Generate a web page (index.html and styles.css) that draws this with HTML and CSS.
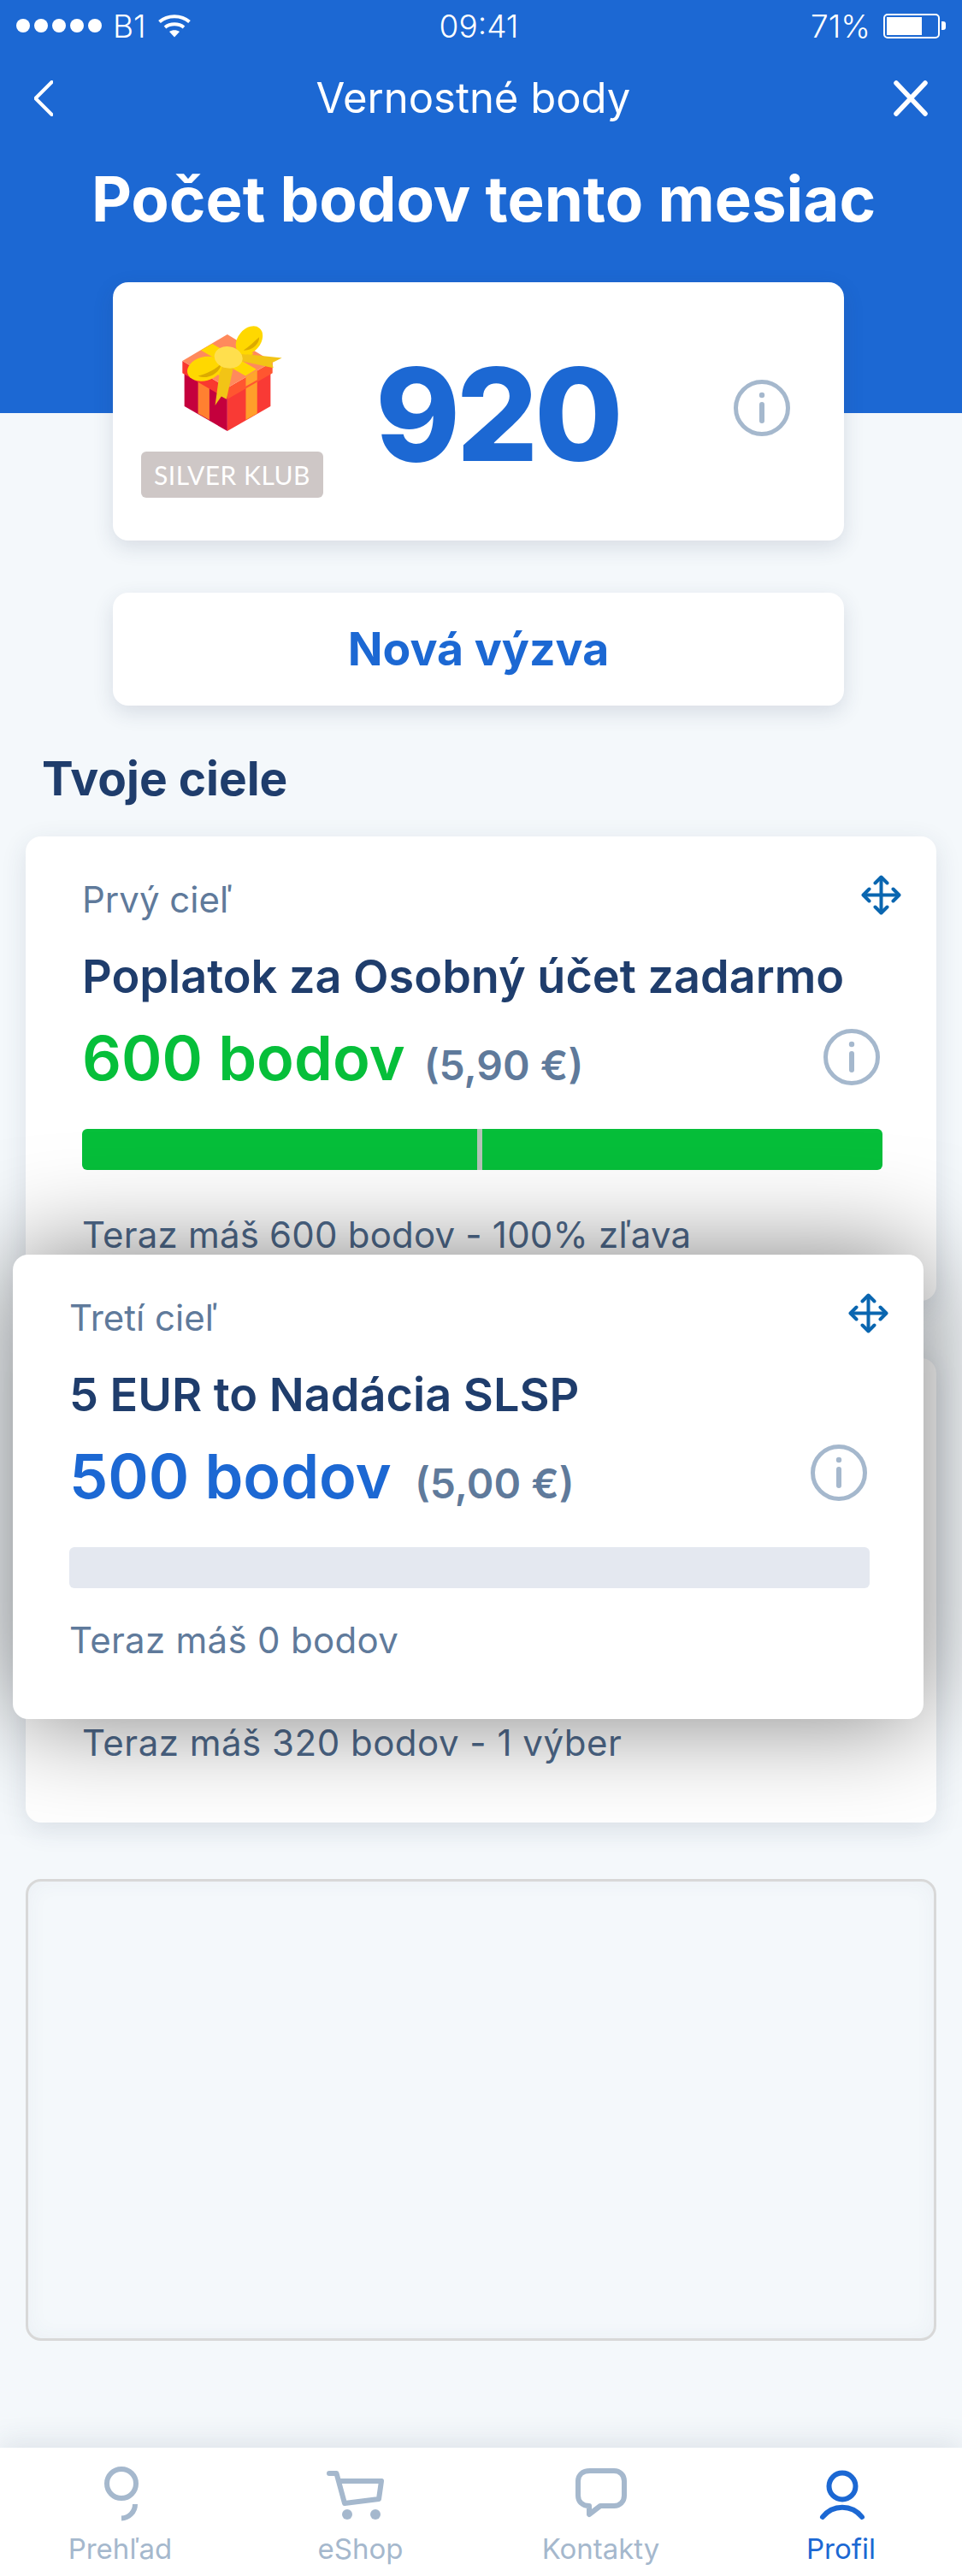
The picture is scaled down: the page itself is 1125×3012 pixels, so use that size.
FILE: index.html
```html
<!DOCTYPE html>
<html lang="sk">
<head>
<meta charset="utf-8">
<title>Vernostné body</title>
<link rel="stylesheet" href="styles.css">
</head>
<body>
<svg class="defs" width="0" height="0" aria-hidden="true">
  <defs>
    <symbol id="info" viewBox="0 0 66 66">
      <circle cx="33" cy="33" r="30.5" fill="none" stroke="currentColor" stroke-width="5"/>
      <circle cx="33" cy="18" r="3.2" fill="currentColor"/>
      <path d="M33 29V48" fill="none" stroke="currentColor" stroke-width="6" stroke-linecap="round"/>
    </symbol>
    <symbol id="move" viewBox="0 0 47 47">
      <g fill="none" stroke="currentColor" stroke-width="4" stroke-linecap="round" stroke-linejoin="round">
        <path d="M23.500 3V44M3 23.500H44"/>
        <path d="M16.500 9.500L23.500 2.500L30.500 9.500M16.500 37.500L23.500 44.500L30.500 37.500M9.500 16.500L2.500 23.500L9.500 30.500M37.500 16.500L44.500 23.500L37.500 30.500"/>
      </g>
    </symbol>
  </defs>
</svg>
<div class="page">
  <header class="hero">
    <div class="status">
      <div class="status-left">
        <span class="dots"><i></i><i></i><i></i><i></i><i></i></span>
        <span>B1</span>
        <svg class="wifi" viewBox="0 0 38 28" width="38" height="28"><g fill="none" stroke="#fff" stroke-width="4"><path d="M1.500 9.500C11 1 27 1 36.500 9.500"/><path d="M8 16C14 11 24 11 30 16"/></g><path d="M13 21C16.500 18.500 21.500 18.500 25 21L19 27.500Z" fill="#fff"/></svg>
      </div>
      <div class="status-time">09:41</div>
      <div class="status-right">
        <span>71%</span>
        <span class="battery"><span class="battery-fill"></span></span>
        <span class="battery-nub"></span>
      </div>
    </div>
    <nav class="nav">
      <svg width="22" height="42" viewBox="0 0 22 42"><path d="M20.500 2L1.500 21L20.500 40" fill="none" stroke="#fff" stroke-width="4" stroke-linecap="round" stroke-linejoin="round"/></svg>
      <span class="nav-title">Vernostné body</span>
      <svg width="40" height="42" viewBox="0 0 40 42"><path d="M3 3L37 39M37 3L3 39" fill="none" stroke="#fff" stroke-width="5.500" stroke-linecap="round"/></svg>
    </nav>
    <h1 class="hero-title">Počet bodov tento mesiac</h1>
  </header>

  <main class="main">
    <section class="summary">
      <div class="club">
        <svg class="gift" viewBox="190 92 350 370" width="117" height="123">
          <polygon points="197,250 348,340 348,462 197,375" fill="#c4003d"/>
          <polygon points="348,340 500,250 500,375 348,462" fill="#f93a35"/>
          <polygon points="245,285 285,308 285,423 245,400" fill="#ff8030"/>
          <polygon points="413,305 453,282 453,400 413,423" fill="#ff9f2a"/>
          <polygon points="190,215 348,310 348,350 190,258" fill="#f9382f"/>
          <polygon points="348,310 507,218 507,258 348,350" fill="#ff5630"/>
          <polygon points="190,215 348,122 507,218 348,310" fill="#ff8a5c"/>
          <polygon points="413,270 453,247 453,282 413,305" fill="#ffa52c"/>
          <polygon points="255,178 295,155 450,245 412,268" fill="#ffd800"/>
          <polygon points="400,165 440,190 322,268 285,245" fill="#ffd800"/>
          <polygon points="395,190 540,205 505,222 510,240 395,215" fill="#f2c416"/>
          <polygon points="325,225 370,235 345,350 327,340 305,372" fill="#f2c416"/>
          <ellipse cx="268" cy="243" rx="62" ry="42" transform="rotate(-15 268 243)" fill="#ffd800"/>
          <path d="M245 268C272 262 305 245 326 226C326 250 285 285 245 268Z" fill="#dcaa00"/>
          <ellipse cx="425" cy="143" rx="40" ry="56" transform="rotate(40 425 143)" fill="#ffd800"/>
          <path d="M405 178C425 165 445 145 460 132C462 155 435 180 405 178Z" fill="#dcaa00"/>
          <ellipse cx="352" cy="203" rx="50" ry="38" transform="rotate(10 352 203)" fill="#ffdf4d"/>
        </svg>
        <div class="badge">SILVER KLUB</div>
      </div>
      <div class="total">920</div>
      <svg class="info info-summary"><use href="#info"/></svg>
    </section>

    <button class="challenge" type="button">Nová výzva</button>

    <h2 class="section-title">Tvoje ciele</h2>

    <div class="goals">
      <article class="goal goal-first">
        <div class="goal-head"><span class="goal-label">Prvý cieľ</span><svg class="move"><use href="#move"/></svg></div>
        <h3 class="goal-title">Poplatok za Osobný účet zadarmo</h3>
        <div class="goal-points">
          <span class="points points-green">600 bodov</span>
          <span class="price">(5,90 €)</span>
          <svg class="info"><use href="#info"/></svg>
        </div>
        <div class="bar bar-full"><span class="bar-mark"></span></div>
        <p class="goal-note">Teraz máš 600 bodov - 100% zľava</p>
      </article>

      <article class="goal goal-covered">
        <p class="goal-note">Teraz máš 320 bodov - 1 výber</p>
      </article>

      <div class="slot"></div>

      <article class="goal goal-dragged">
        <div class="goal-head"><span class="goal-label">Tretí cieľ</span><svg class="move"><use href="#move"/></svg></div>
        <h3 class="goal-title">5 EUR to Nadácia SLSP</h3>
        <div class="goal-points">
          <span class="points points-blue">500 bodov</span>
          <span class="price price-wide">(5,00 €)</span>
          <svg class="info"><use href="#info"/></svg>
        </div>
        <div class="bar"></div>
        <p class="goal-note">Teraz máš 0 bodov</p>
      </article>
    </div>
  </main>

  <footer class="tabs">
    <a class="tab">
      <svg viewBox="0 0 80 70" width="80" height="70"><circle cx="41" cy="24" r="17" fill="none" stroke="currentColor" stroke-width="6"/><path d="M57 48A16.500 16.500 0 0 1 41 64.500" fill="none" stroke="currentColor" stroke-width="6"/></svg>
      <span>Prehľad</span>
    </a>
    <a class="tab">
      <svg viewBox="0 0 80 70" width="80" height="70"><path d="M3 12H11.500L21 47L61 42L64 21H15" fill="none" stroke="currentColor" stroke-width="6" stroke-linecap="round" stroke-linejoin="round"/><circle cx="24" cy="60" r="6" fill="currentColor"/><circle cx="57" cy="60" r="6" fill="currentColor"/></svg>
      <span>eShop</span>
    </a>
    <a class="tab">
      <svg viewBox="0 0 80 70" width="80" height="70"><path d="M27 9H55C62 9 67 14 67 21V38C67 45 62 50 55 50H39L26 60V50C18 50 13 45 13 38V21C13 14 18 9 27 9Z" fill="none" stroke="currentColor" stroke-width="6" stroke-linejoin="round"/></svg>
      <span>Kontakty</span>
    </a>
    <a class="tab tab-active">
      <svg viewBox="0 0 80 70" width="80" height="70"><circle cx="41" cy="27" r="15.500" fill="none" stroke="currentColor" stroke-width="6"/><path d="M18 63C30 48 52 48 64 63" fill="none" stroke="currentColor" stroke-width="6" stroke-linecap="round"/></svg>
      <span>Profil</span>
    </a>
  </footer>
</div>
</body>
</html>
```
FILE: styles.css
```css
* { box-sizing: border-box; }
html, body { margin: 0; padding: 0; }
body { font-family: Inter, "Noto Sans", sans-serif; background: #f4f8fb; color: #1f3d6c; }
.defs { position: absolute; }
.page { width: 1125px; height: 3012px; display: flex; flex-direction: column; overflow: hidden; }

.hero { height: 483px; background: #1c68d3; color: #fff; }
.status { display: grid; grid-template-columns: 1fr auto 1fr; align-items: center; height: 60px; padding: 0 19px; font-size: 37px; font-weight: 300; }
.status-left { display: flex; align-items: center; gap: 13px; }
.status-time { margin-right: 5px; }
.dots { display: flex; gap: 5px; }
.dots i { width: 16px; height: 16px; border-radius: 50%; background: #fff; }
.wifi { margin-left: 1px; }
.status-right { display: flex; align-items: center; justify-content: flex-end; }
.battery { width: 66px; height: 29px; margin-left: 15px; border: 2px solid #fff; border-radius: 5px; padding: 2px; }
.battery-fill { display: block; width: 41px; height: 100%; background: #fff; }
.battery-nub { width: 5px; height: 10px; margin-left: 2px; background: #fff; border-radius: 0 3px 3px 0; }

.nav { display: flex; align-items: center; justify-content: space-between; height: 50px; margin-top: 30px; padding: 0 40px; }
.nav-title { font-size: 49px; line-height: 50px; font-weight: 400; }
.hero-title { margin: 53px 0 0; text-align: center; font-size: 72.6px; line-height: 80px; font-weight: 700; padding-left: 6px; }

.main { display: flex; flex-direction: column; margin-top: -153px; }
.summary { display: flex; align-items: flex-start; width: 855px; height: 302px; margin-left: 132px; padding: 51px 63px 0 33px; background: #fff; border-radius: 18px; box-shadow: 0 8px 24px rgba(40, 60, 90, .14); }
.club { display: flex; flex-direction: column; align-items: center; width: 213px; gap: 24px; }
.gift { display: block; }
.badge { width: 213px; height: 54px; border-radius: 6px; background: #cec7c6; color: #fff; font-family: Lato, sans-serif; font-size: 30px; line-height: 54px; text-align: center; letter-spacing: .5px; }
.total { margin: 29px 0 0 61px; font-size: 150px; line-height: 150px; font-weight: 800; color: #1c68d3; letter-spacing: -4.5px; }
.info { display: block; width: 66px; height: 66px; color: #a5b8cd; flex: none; margin-left: auto; }
.info-summary { margin-top: 63px; }

.challenge { display: block; width: 855px; height: 132px; margin: 61px 0 0 132px; padding: 0; border: 0; border-radius: 18px; background: #fff; box-shadow: 0 8px 24px rgba(40, 60, 90, .14); color: #1c68d3; font: 700 53.5px/60px Inter, sans-serif; }

.section-title { margin: 55px 0 0 49px; font-size: 55px; line-height: 60px; font-weight: 700; color: #1f3d6c; }

.goals { position: relative; display: flex; flex-direction: column; gap: 67px; margin: 38px 0 0 30px; width: 1065px; }
.goal { height: 543px; padding: 45px 63px 0 66px; background: #fff; border-radius: 18px; box-shadow: 0 8px 30px rgba(40, 60, 90, .12); }
.goal-covered { padding-top: 425px; }
.goal-dragged { position: absolute; top: 489px; left: -15px; width: 1065px; box-shadow: 0 0 120px rgba(0, 0, 0, .5); }
.slot { height: 540px; margin-top: -1px; border: 3px solid #d8d8d8; border-radius: 18px; box-shadow: inset 0 0 24px rgba(60, 80, 110, .05); }

.goal-head { display: flex; align-items: center; justify-content: space-between; height: 54px; }
.goal-label { font-size: 42px; line-height: 54px; padding-top: 4px; color: #5f7a9b; }
.move { display: block; width: 47px; height: 47px; margin-right: -22px; margin-top: -7px; color: #0a66b0; }
.goal-title { margin: 35px 0 0; font-size: 54px; line-height: 60px; font-weight: 600; color: #1f3d6c; }
.goal-points { display: flex; align-items: baseline; height: 80px; margin-top: 25px; }
.points { font-size: 72px; line-height: 80px; font-weight: 600; }
.points-green { color: #06bf3a; }
.points-blue { color: #1c68d3; }
.price { margin-left: 22px; font-size: 48px; line-height: 60px; font-weight: 600; color: #5f7a9b; padding-top: 2px; }
.price-wide { margin-left: 27px; }
.goal-points .info { align-self: center; margin-right: 3px; margin-top: -3px; }
.goal-dragged .goal-points .info { margin-top: -8px; }
.bar { position: relative; height: 48px; margin-top: 43px; border-radius: 6px; background: #e4e8f0; }
.bar-full { background: #06bf3a; }
.bar-mark { position: absolute; left: 462px; top: 0; width: 6px; height: 100%; background: #b5c4b9; }
.goal-note { margin: 36px 0 0; font-size: 42px; line-height: 50px; color: #4f6a8c; letter-spacing: .3px; }
.goal-first .goal-note { margin-top: 51px; letter-spacing: .2px; }
.goal-covered .goal-note { margin: 0; letter-spacing: .5px; }
.goal-dragged .goal-note { color: #5f7a9b; }

.tabs { display: grid; grid-template-columns: repeat(4, 281px); height: 150px; margin-top: auto; background: #fff; box-shadow: 0 -8px 30px rgba(40, 60, 90, .1); }
.tab { display: flex; flex-direction: column; align-items: center; padding-top: 18px; color: #a5b8cd; font-size: 33px; line-height: 40px; }
.tab svg { display: block; }
.tab span { margin-top: 10px; }
.tab-active { color: #1c68d3; }
```
